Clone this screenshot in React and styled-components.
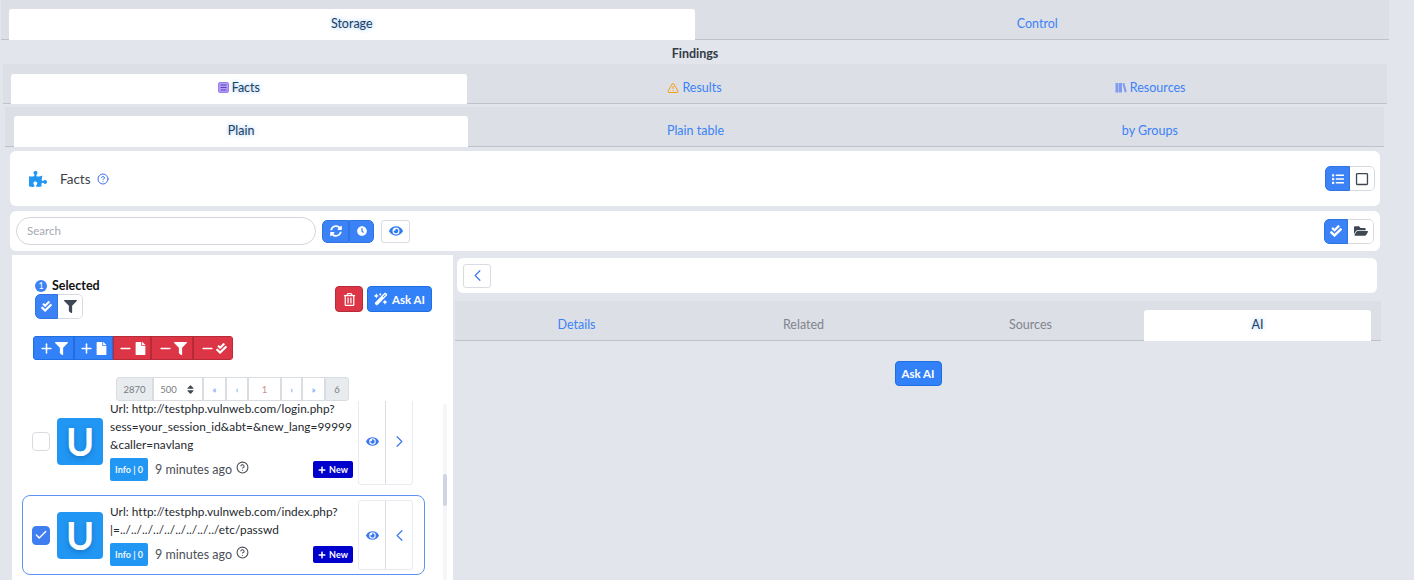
import React from 'react';
import styled, { createGlobalStyle } from 'styled-components';
import {
  FaPuzzlePiece, FaSyncAlt, FaClock, FaEye, FaCheckDouble, FaFilter, FaRegTrashAlt,
  FaPlus, FaFile, FaList, FaRegSquare, FaFolderOpen, FaSort,
} from 'react-icons/fa';
import { FaWandMagicSparkles } from 'react-icons/fa6';
import { LuCheck, LuChevronLeft, LuChevronRight, LuCircleHelp, LuMinus, LuPlus, LuTriangleAlert } from 'react-icons/lu';

const GlobalStyle = createGlobalStyle`
  html, body {
    margin: 0;
    padding: 0;
    height: 580px;
    overflow: hidden;
    background: #e2e5ec;
    font-family: "Lato", "Open Sans", sans-serif;
    font-size: 13px;
    color: #212529;
  }
  * { box-sizing: border-box; }
`;

const items = [
  {
    id: 1,
    lines: ['Url: http://testphp.vulnweb.com/login.php?', 'sess=your_session_id&abt=&new_lang=99999', '&caller=navlang'],
    selected: false,
  },
  {
    id: 2,
    lines: ['Url: http://testphp.vulnweb.com/index.php?', '|=../../../../../../../../../etc/passwd'],
    selected: true,
  },
];

const TableIcon = () => (
  <svg width="11" height="11" viewBox="0 0 11 11">
    <rect x="0.5" y="0.5" width="10" height="10" rx="1.5" fill="#b49cf7" stroke="#9a7ff0" />
    <path d="M2.5 3h6M2.5 5.5h6M2.5 8h6" stroke="#5d45b8" strokeWidth="1" />
  </svg>
);

const BooksIcon = () => (
  <svg width="12" height="11" viewBox="0 0 12 11">
    <path d="M0.5 1h3v9.5h-3zM4 1h3v9.5H4zM7.4 1.6l1.9-.6 2.5 8.8-2 .6z" fill="#7f9cf0" />
  </svg>
);

const Tabs = ({ tabs, active, ...rest }) => (
  <TabBar {...rest}>
    {tabs.map((t, i) => (
      <Tab key={t.label} $active={i === active} $muted={t.muted}>
        {t.icon}
        {t.label}
      </Tab>
    ))}
  </TabBar>
);

const ListItem = ({ item }) => (
  <Item $selected={item.selected}>
    <Check $on={item.selected}>{item.selected && <LuCheck size={14} strokeWidth={2.5} />}</Check>
    <Avatar>U</Avatar>
    <ItemBody>
      {item.lines.map(l => <ItemLine key={l}>{l}</ItemLine>)}
      <Meta>
        <Severity>Info | 0</Severity>
        <Time>9 minutes ago</Time>
        <HelpIcon><LuCircleHelp size={13} /></HelpIcon>
        <NewBadge><FaPlus size={8} /> New</NewBadge>
      </Meta>
    </ItemBody>
    <ItemActions>
      <ItemAction><FaEye size={13} /></ItemAction>
      <ItemAction>
        {item.selected
          ? <LuChevronLeft size={19} strokeWidth={1.5} />
          : <LuChevronRight size={19} strokeWidth={1.5} />}
      </ItemAction>
    </ItemActions>
  </Item>
);

export default function App() {
  return (
    <Page>
      <GlobalStyle />
      <Tabs $x="1px" $w="1388px" tabs={[{ label: 'Storage' }, { label: 'Control' }]} active={0} />
      <SectionTitle>Findings</SectionTitle>
      <Tabs
        $x="3px"
        $w="1384px"
        $pt="10px"
        tabs={[
          { label: 'Facts', icon: <TableIcon /> },
          { label: 'Results', icon: <LuTriangleAlert size={12} color="#f59e0b" /> },
          { label: 'Resources', icon: <BooksIcon /> },
        ]}
        active={0}
      />
      <ThirdTabs>
        <Tabs
          $x="5px"
          $w="1379px"
          $pl="9px"
          $pr="7px"
          tabs={[{ label: 'Plain' }, { label: 'Plain table' }, { label: 'by Groups' }]}
          active={0}
        />
      </ThirdTabs>

      <HeaderCard>
        <HeaderTitle>
          <FaPuzzlePiece size={18} color="#2196f3" />
          <span>Facts</span>
          <LuCircleHelp size={12} color="#3b6ff0" />
        </HeaderTitle>
        <BtnGroup>
          <GroupBtn $primary $w="25px" $h="25px"><FaList size={12} /></GroupBtn>
          <GroupBtn $w="25px" $h="25px"><FaRegSquare size={14} /></GroupBtn>
        </BtnGroup>
      </HeaderCard>

      <SearchCard>
        <SearchRow>
          <SearchInput placeholder="Search" />
          <BtnGroup>
            <GroupBtn $primary $w="27px" $h="23px"><FaSyncAlt size={12} /></GroupBtn>
            <GroupBtn $primary $w="25px" $h="23px"><FaClock size={10} /></GroupBtn>
          </BtnGroup>
          <OutlineBtn><FaEye size={14} /></OutlineBtn>
        </SearchRow>
        <BtnGroup>
          <GroupBtn $primary $w="24px" $h="25px"><FaCheckDouble size={12} /></GroupBtn>
          <GroupBtn $w="26px" $h="25px"><FaFolderOpen size={14} /></GroupBtn>
        </BtnGroup>
      </SearchCard>

      <Columns>
        <LeftPanel>
          <SelectionRow>
            <div>
              <SelectedLabel><CountBadge>1</CountBadge>Selected</SelectedLabel>
              <BtnGroup>
                <GroupBtn $primary $w="23px" $h="25px"><FaCheckDouble size={11} /></GroupBtn>
                <GroupBtn $w="25px" $h="25px"><FaFilter size={13} /></GroupBtn>
              </BtnGroup>
            </div>
            <SelectionActions>
              <SolidBtn $danger $w="28px"><FaRegTrashAlt size={13} /></SolidBtn>
              <SolidBtn $w="65px"><FaWandMagicSparkles size={14} /> Ask AI</SolidBtn>
            </SelectionActions>
          </SelectionRow>

          <ActionGroup>
            <ActionBtn $w="41px"><LuPlus size={15} strokeWidth={2.5} /><FaFilter size={13} /></ActionBtn>
            <ActionBtn $w="39px"><LuPlus size={15} strokeWidth={2.5} /><FaFile size={13} /></ActionBtn>
            <ActionBtn $danger $w="38px"><LuMinus size={15} strokeWidth={2.5} /><FaFile size={13} /></ActionBtn>
            <ActionBtn $danger $w="42px"><LuMinus size={15} strokeWidth={2.5} /><FaFilter size={13} /></ActionBtn>
            <ActionBtn $danger $w="40px"><LuMinus size={15} strokeWidth={2.5} /><FaCheckDouble size={11} /></ActionBtn>
          </ActionGroup>

          <Pager>
            <PageCell $w="37px" $grey>2870</PageCell>
            <PageCell $w="50px">500 <FaSort size={11} color="#3f4753" /></PageCell>
            <PageCell $w="23px" $blue>«</PageCell>
            <PageCell $w="22px" $blue>‹</PageCell>
            <PageCell $w="33px" $red>1</PageCell>
            <PageCell $w="21px" $blue>›</PageCell>
            <PageCell $w="23px" $blue>»</PageCell>
            <PageCell $w="24px" $grey>6</PageCell>
          </Pager>

          <ListWrap>
            <List>
              {items.map(item => <ListItem key={item.id} item={item} />)}
            </List>
            <ScrollTrack><ScrollThumb /></ScrollTrack>
          </ListWrap>
        </LeftPanel>

        <RightPanel>
          <BackBar>
            <BackBtn><LuChevronLeft size={19} strokeWidth={1.5} /></BackBtn>
          </BackBar>
          <DetailTabs
            tabs={[{ label: 'Details' }, { label: 'Related', muted: true }, { label: 'Sources', muted: true }, { label: 'AI' }]}
            active={3}
          />
          <AskRow>
            <SolidBtn $w="47px" $h="25px">Ask AI</SolidBtn>
          </AskRow>
        </RightPanel>
      </Columns>
    </Page>
  );
}

const Page = styled.div`
  width: 1414px;
  height: 580px;
  overflow: hidden;
`;

const TabBar = styled.div`
  display: flex;
  height: 40px;
  width: ${p => p.$w || 'auto'};
  margin-left: ${p => p.$x || 0};
  padding: ${p => p.$pt || '9px'} ${p => p.$pr || '9px'} 0 ${p => p.$pl || '8px'};
  background: #dcdfe6;
  border-bottom: 1px solid #bfc2c9;
`;

const Tab = styled.div`
  flex: 1;
  display: flex;
  align-items: center;
  justify-content: center;
  gap: 3px;
  margin-bottom: -1px;
  padding-bottom: 3px;
  font-size: 12.5px;
  border-radius: 3px 3px 0 0;
  color: ${p => (p.$active ? '#22405f' : p.$muted ? '#80858d' : '#3b82f6')};
  background: ${p => (p.$active ? '#fff' : 'transparent')};
  text-shadow: ${p => (p.$active ? '0 0 4px rgba(59, 150, 246, 0.6)' : 'none')};
`;

const SectionTitle = styled.div`
  height: 24px;
  line-height: 27px;
  text-align: center;
  font-size: 12.5px;
  font-weight: 700;
  color: #333a44;
  width: 1390px;
`;

const ThirdTabs = styled.div`
  margin-top: 3px;
`;

const HeaderCard = styled.div`
  display: flex;
  align-items: center;
  justify-content: space-between;
  width: 1370px;
  height: 55px;
  margin: 4px 0 0 10px;
  padding: 0 5px 0 19px;
  background: #fff;
  border-radius: 6px;
`;

const HeaderTitle = styled.div`
  display: flex;
  align-items: center;
  gap: 6px;
  font-size: 13.5px;
  color: #3a3f47;
  span { margin-left: 7px; line-height: 18px; padding-top: 1px; }
`;

const SearchCard = styled.div`
  display: flex;
  align-items: center;
  justify-content: space-between;
  width: 1370px;
  height: 40px;
  margin: 5px 0 0 10px;
  padding: 0 6px;
  background: #fff;
  border-radius: 6px;
`;

const SearchRow = styled.div`
  display: flex;
  align-items: center;
  gap: 6px;
`;

const SearchInput = styled.input`
  width: 300px;
  height: 28px;
  padding: 0 10px 2px;
  border: 1px solid #d3d6dc;
  border-radius: 14px;
  outline: none;
  font: inherit;
  font-size: 11.5px;
  &::placeholder { color: #a6a9af; }
`;

const BtnGroup = styled.div`
  display: inline-flex;
  border-radius: 5px;
  overflow: hidden;
`;

const GroupBtn = styled.div`
  display: flex;
  align-items: center;
  justify-content: center;
  width: ${p => p.$w};
  height: ${p => p.$h};
  color: ${p => (p.$primary ? '#fff' : '#3f4753')};
  background: ${p => (p.$primary ? '#3b82f6' : '#fff')};
  border: 1px solid ${p => (p.$primary ? '#2f74e0' : '#d6d9df')};
  border-left-width: ${p => (p.$primary ? '1px' : 0)};
  &:last-child { border-radius: 0 5px 5px 0; }
  &:first-child { border-radius: 5px 0 0 5px; }
`;

const OutlineBtn = styled.div`
  display: flex;
  align-items: center;
  justify-content: center;
  width: 29px;
  height: 23px;
  margin-left: 1px;
  color: #2f7bf0;
  background: #fff;
  border: 1px solid #d9dce2;
  border-radius: 3px;
`;

const Columns = styled.div`
  display: flex;
  margin: 4px 0 0 12px;
`;

const LeftPanel = styled.div`
  width: 441px;
  height: 325px;
  background: #fff;
`;

const SelectionRow = styled.div`
  display: flex;
  justify-content: space-between;
  padding: 22px 21px 0 23px;
  height: 81px;
`;

const SelectedLabel = styled.div`
  display: flex;
  align-items: center;
  gap: 5px;
  height: 17px;
  font-size: 12.5px;
  font-weight: 700;
  color: #111;
`;

const CountBadge = styled.span`
  display: flex;
  align-items: center;
  justify-content: center;
  width: 12px;
  height: 12px;
  border-radius: 50%;
  font-size: 9px;
  font-weight: 400;
  color: #fff;
  background: #3b82f6;
`;

const SelectionActions = styled.div`
  display: flex;
  gap: 4px;
  padding-top: 9px;
`;

const SolidBtn = styled.div`
  display: inline-flex;
  align-items: center;
  justify-content: center;
  gap: 4px;
  width: ${p => p.$w};
  height: ${p => p.$h || '26px'};
  font-size: 11.5px;
  font-weight: 700;
  color: #fff;
  background: ${p => (p.$danger ? '#dc3545' : '#3381f8')};
  border: 1px solid ${p => (p.$danger ? '#b82a38' : '#1f6fe0')};
  border-radius: 4px;
`;

const ActionGroup = styled.div`
  display: flex;
  margin-left: 21px;
  width: 200px;
  height: 24px;
  border-radius: 4px;
  overflow: hidden;
`;

const ActionBtn = styled.div`
  display: flex;
  align-items: center;
  justify-content: center;
  gap: 1px;
  width: ${p => p.$w};
  color: #fff;
  background: ${p => (p.$danger ? '#dc3545' : '#3381f8')};
  border: 1px solid ${p => (p.$danger ? '#b82a38' : '#1f6fe0')};
`;

const Pager = styled.div`
  display: flex;
  margin: 17px 0 0 104px;
  height: 24px;
`;

const PageCell = styled.div`
  display: flex;
  align-items: center;
  justify-content: center;
  gap: 8px;
  width: ${p => p.$w};
  font-size: 9.5px;
  color: ${p => (p.$blue ? '#5a93f5' : p.$red ? '#cf8a92' : '#777c84')};
  background: ${p => (p.$grey ? '#e9ecef' : '#fff')};
  border: 1px solid #d9dce1;
  &:first-child { border-radius: 3px 0 0 3px; }
  &:last-child { border-radius: 0 3px 3px 0; }
`;

const ListWrap = styled.div`
  display: flex;
  height: 179px;
  overflow: hidden;
`;

const List = styled.div`
  display: flex;
  flex-direction: column;
  gap: 5px;
  width: 431px;
  margin-top: -9px;
  padding-left: 10px;
`;

const Item = styled.div`
  display: flex;
  align-items: stretch;
  flex-shrink: 0;
  width: 403px;
  padding: 4px 11px 4px 9px;
  border: 1px solid ${p => (p.$selected ? '#5b93f5' : 'transparent')};
  border-radius: 8px;
`;

const Check = styled.div`
  display: flex;
  align-items: center;
  justify-content: center;
  align-self: center;
  width: 18px;
  height: 19px;
  color: #fff;
  background: ${p => (p.$on ? '#3f7ef0' : '#fff')};
  border: 1px solid ${p => (p.$on ? '#3f7ef0' : '#d8dbe0')};
  border-radius: 4px;
`;

const Avatar = styled.div`
  display: flex;
  align-items: center;
  justify-content: center;
  align-self: center;
  flex-shrink: 0;
  width: 46px;
  height: 47px;
  margin: 0 7px;
  font-size: 38px;
  font-weight: 700;
  color: #fff;
  background: #2196f3;
  text-shadow: 0 2px 5px rgba(10, 80, 150, 0.45);
  border-radius: 4px;
`;

const ItemBody = styled.div`
  display: flex;
  flex-direction: column;
  flex: 1;
  min-width: 0;
  padding: 3px 0 4px;
`;

const ItemLine = styled.div`
  height: 18px;
  line-height: 17px;
  font-size: 11.8px;
  letter-spacing: 0.05px;
  color: #24282e;
  white-space: nowrap;
`;

const Meta = styled.div`
  display: flex;
  align-items: center;
  height: 23px;
  margin-top: 4px;
`;

const Severity = styled.div`
  display: flex;
  align-items: center;
  justify-content: center;
  width: 38px;
  height: 23px;
  font-size: 9px;
  font-weight: 700;
  color: #eef6ff;
  background: #2196f3;
  border-radius: 2px;
`;

const Time = styled.span`
  margin-left: 7px;
  font-size: 12.5px;
  color: #4a4f57;
`;

const HelpIcon = styled.span`
  display: flex;
  margin: -5px 0 0 4px;
  color: #4a4f57;
`;

const NewBadge = styled.div`
  display: flex;
  align-items: center;
  justify-content: center;
  gap: 3px;
  width: 40px;
  height: 17px;
  margin-left: auto;
  font-size: 9px;
  font-weight: 700;
  color: #fff;
  background: #0000cd;
  border-radius: 2px;
`;

const ItemActions = styled.div`
  display: flex;
  flex-shrink: 0;
  width: 55px;
  margin-left: 5px;
  border: 1px solid #e8ebef;
  border-radius: 3px;
`;

const ItemAction = styled.div`
  display: flex;
  align-items: center;
  justify-content: center;
  flex: 1;
  color: #3b78f0;
  & + & { border-left: 1px solid #d5dde2; }
`;

const ScrollTrack = styled.div`
  width: 4px;
  margin-top: 3px;
  background: #f5f6f8;
`;

const ScrollThumb = styled.div`
  width: 4px;
  height: 32px;
  margin-top: 70px;
  background: #cdd5e3;
  border-radius: 2px;
`;

const RightPanel = styled.div`
  width: 926px;
  margin-left: 2px;
`;

const BackBar = styled.div`
  display: flex;
  align-items: center;
  width: 920px;
  height: 35px;
  margin: 3px 0 8px 2px;
  padding-left: 6px;
  background: #fff;
  border-radius: 6px;
`;

const BackBtn = styled.div`
  display: flex;
  align-items: center;
  justify-content: center;
  width: 28px;
  height: 24px;
  color: #3b78f0;
  border: 1px solid #d9dce2;
  border-radius: 3px;
`;

const DetailTabs = styled(Tabs)`
  padding-right: 10px;
`;

const AskRow = styled.div`
  display: flex;
  justify-content: center;
  padding-top: 20px;
`;
